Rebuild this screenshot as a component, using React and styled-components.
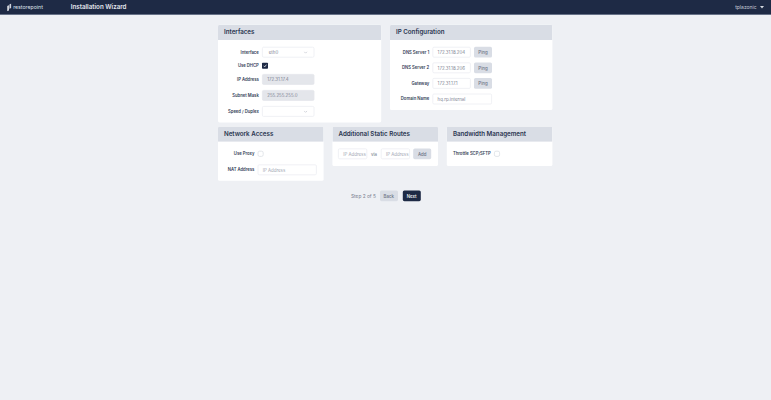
import React from 'react'
import styled, { createGlobalStyle } from 'styled-components'

const Global = createGlobalStyle`
  html, body { margin: 0; padding: 0; height: 100%; overflow: hidden; }
  body { background: #eef0f4; font-family: 'Inter', 'Liberation Sans', sans-serif; color: #1e2a45; }
  * { box-sizing: border-box; }
`
const Viewport = styled.div`
  width: 771px;
  height: 400px;
  overflow: hidden;
  opacity: 0.999;
`
const Page = styled.div`
  width: 1927.5px;
  height: 1000px;
  background: #eef0f4;
  transform: scale(0.4);
  transform-origin: top left;
`
const Header = styled.header`
  display: flex;
  align-items: center;
  height: 37px;
  padding: 0 18px;
  background: #1e2a45;
  border-bottom: 2px solid #6f7a90;
  color: #fff;
`
const Brand = styled.div`
  display: flex;
  align-items: center;
  gap: 4px;
  width: 159px;
  font-size: 13px;
  color: #dfe2ea;
`
const HeaderTitle = styled.div`
  flex: 1;
  font-size: 15.5px;
  font-weight: 600;
  color: #e4e7ee;
`
const UserMenu = styled.div`
  display: flex;
  align-items: center;
  gap: 8px;
  font-size: 12.5px;
  color: #c9cdd8;
`
const Caret = styled.span`
  width: 0;
  height: 0;
  border-left: 5px solid transparent;
  border-right: 5px solid transparent;
  border-top: 6px solid #d5d8e0;
`
const Main = styled.main`
  display: flex;
  flex-direction: column;
  gap: 10px;
  width: 836px;
  margin: 25px 0 0 545px;
`
const TopRow = styled.div`
  display: grid;
  grid-template-columns: 408px 406px;
  column-gap: 22px;
  align-items: start;
`
const BottomRow = styled.div`
  display: grid;
  grid-template-columns: repeat(3, 1fr);
  column-gap: 22.5px;
  align-items: start;
`
const Card = styled.section`
  background: #fff;
  border-radius: 4px;
  overflow: hidden;
`
const CardHead = styled.h2`
  margin: 0;
  height: 38px;
  padding: 0 15px;
  background: #d9dde5;
  font-size: 15.5px;
  font-weight: 600;
  line-height: 38px;
  color: #2a3550;
  white-space: nowrap;
`
const CardBody = styled.div`
  display: flex;
  flex-direction: column;
  gap: ${p => p.$gap ?? 13}px;
  padding: 17px ${p => p.$px ?? 0}px ${p => p.$pb ?? 14}px;
`
const Row = styled.div`
  display: flex;
  align-items: center;
  gap: 8px;
  height: ${p => p.$h ?? 27}px;
`
const Label = styled.label`
  flex: none;
  width: ${p => (p.$w ? `${p.$w}px` : 'auto')};
  font-size: 10.5px;
  font-weight: 600;
  text-align: right;
  color: #333d56;
  white-space: nowrap;
`
const Field = styled.div`
  display: flex;
  align-items: center;
  justify-content: space-between;
  flex: none;
  width: ${p => p.$w}px;
  height: 27px;
  padding: 0 ${p => p.$px ?? 11}px;
  background: ${p => (p.$off ? '#e4e6eb' : '#fff')};
  border: 2px solid ${p => (p.$off ? '#e4e6eb' : '#eceef2')};
  border-radius: 4px;
  font-size: 11px;
  color: ${p => (p.$hint ? '#a0a5b2' : '#7a8090')};
  white-space: nowrap;
`
const Chevron = styled.svg`
  width: 10px;
  height: 6px;
  flex: none;
`
const Check = styled.span`
  display: flex;
  align-items: center;
  justify-content: center;
  flex: none;
  width: 15px;
  height: 15px;
  background: ${p => (p.$on ? '#1e2a45' : '#fff')};
  border: ${p => (p.$on ? 'none' : '2px solid #dcdfe5')};
  border-radius: ${p => (p.$on ? '2px' : '5px')};
`
const Button = styled.button`
  flex: none;
  width: 45px;
  height: 27px;
  padding: 0;
  border: none;
  border-radius: 4px;
  background: ${p => (p.$dark ? '#1e2a45' : '#d9dde5')};
  color: ${p => (p.$dark ? '#fff' : '#6a7184')};
  font-family: inherit;
  font-size: 11px;
  font-weight: 500;
`
const Via = styled.span`
  flex: none;
  width: 18px;
  text-align: center;
  font-size: 11px;
  color: #6a7184;
`
const Steps = styled.div`
  display: flex;
  align-items: center;
  margin: 14px 0 0 ${(351 - 218) * 2.5}px;
`
const StepText = styled.span`
  width: 72px;
  font-size: 12px;
  color: #7a8090;
`
const StepButtons = styled.div`
  display: flex;
  gap: 12px;
`

const ChevronIcon = () => (
  <Chevron viewBox="0 0 10 6">
    <path d="M1 1l4 4 4-4" fill="none" stroke="#b4b8c3" strokeWidth="1.4" />
  </Chevron>
)

const Logo = () => (
  <svg width="11" height="20" viewBox="0 0 11 20">
    <path d="M0 7L4 5V18L0 20Z" fill="#fff" />
    <path d="M5.5 3L10 0.5V12L5.5 14Z" fill="#cfd3dc" />
  </svg>
)

const dnsRows = [
  { label: 'DNS Server 1', value: '172.31.18.204' },
  { label: 'DNS Server 2', value: '172.31.18.206' },
  { label: 'Gateway', value: '172.31.17.1' },
]

export default function App() {
  return (
    <Viewport>
      <Global />
      <Page>
        <Header>
          <Brand><Logo />restorepoint</Brand>
          <HeaderTitle>Installation Wizard</HeaderTitle>
          <UserMenu>tplazonic<Caret /></UserMenu>
        </Header>
        <Main>
          <TopRow>
            <Card>
              <CardHead>Interfaces</CardHead>
              <CardBody>
                <Row>
                  <Label $w={102}>Interface</Label>
                  <Field $w={131} $px={15}>eth0<ChevronIcon /></Field>
                </Row>
                <Row $h={15}>
                  <Label $w={102}>Use DHCP</Label>
                  <Check $on>
                    <svg width="11" height="11" viewBox="0 0 8 8">
                      <path d="M1.5 4l2 2 3-4" fill="none" stroke="#fff" strokeWidth="1.3" />
                    </svg>
                  </Check>
                </Row>
                <Row>
                  <Label $w={102}>IP Address</Label>
                  <Field $w={131} $off>172.31.17.4</Field>
                </Row>
                <Row>
                  <Label $w={102}>Subnet Mask</Label>
                  <Field $w={131} $off>255.255.255.0</Field>
                </Row>
                <Row>
                  <Label $w={102}>Speed / Duplex</Label>
                  <Field $w={131} $px={15}><span /><ChevronIcon /></Field>
                </Row>
              </CardBody>
            </Card>
            <Card>
              <CardHead>IP Configuration</CardHead>
              <CardBody $gap={12}>
                {dnsRows.map(r => (
                  <Row key={r.label}>
                    <Label $w={98}>{r.label}</Label>
                    <Field $w={96}>{r.value}</Field>
                    <Button>Ping</Button>
                  </Row>
                ))}
                <Row>
                  <Label $w={98}>Domain Name</Label>
                  <Field $w={149}>hq.rp.internal</Field>
                </Row>
              </CardBody>
            </Card>
          </TopRow>
          <BottomRow>
            <Card>
              <CardHead>Network Access</CardHead>
              <CardBody>
                <Row>
                  <Label $w={91}>Use Proxy</Label>
                  <Check />
                </Row>
                <Row>
                  <Label $w={91}>NAT Address</Label>
                  <Field $w={148} $hint>IP Address</Field>
                </Row>
              </CardBody>
            </Card>
            <Card>
              <CardHead>Additional Static Routes</CardHead>
              <CardBody $px={14} $pb={17}>
                <Row>
                  <Field $w={73} $hint>IP Address</Field>
                  <Via>via</Via>
                  <Field $w={73} $hint>IP Address</Field>
                  <Button>Add</Button>
                </Row>
              </CardBody>
            </Card>
            <Card>
              <CardHead>Bandwidth Management</CardHead>
              <CardBody $px={15} $pb={17}>
                <Row>
                  <Label>Throttle SCP/SFTP</Label>
                  <Check />
                </Row>
              </CardBody>
            </Card>
          </BottomRow>
          <Steps>
            <StepText>Step 2 of 5</StepText>
            <StepButtons>
              <Button>Back</Button>
              <Button $dark>Next</Button>
            </StepButtons>
          </Steps>
        </Main>
      </Page>
    </Viewport>
  )
}
